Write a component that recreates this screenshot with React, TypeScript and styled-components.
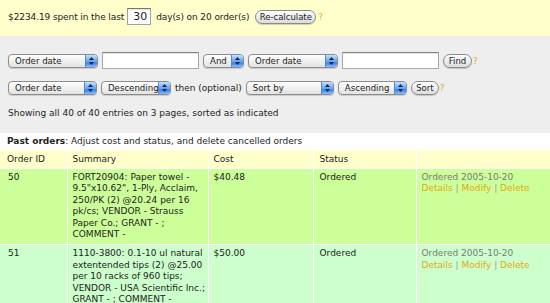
import React from "react";
import styled, { createGlobalStyle } from "styled-components";

const GlobalStyle = createGlobalStyle`
  body {
    margin: 0;
    background: #fff;
    font-family: "DejaVu Sans", "Liberation Sans", sans-serif;
    font-size: 9px;
    color: #222;
  }
`;

const SpendBar = styled.div`
  height: 36px;
  box-sizing: border-box;
  background: #ffffcc;
  display: flex;
  align-items: center;
  padding: 0 8px 3px;
  letter-spacing: -0.1px;
`;

const DaysInput = styled.div`
  width: 24px;
  height: 17px;
  box-sizing: border-box;
  margin: 0 5px 0 3px;
  border: 1px solid #a0a0a0;
  border-top-color: #777;
  background: #fff;
  font-size: 11px;
  line-height: 15px;
  padding-left: 5px;
  letter-spacing: 0;
  box-shadow: inset 0 1px 1px rgba(0, 0, 0, 0.12);
`;

const PillButton = styled.div<{ $w: number }>`
  width: ${(p) => p.$w}px;
  height: 14px;
  box-sizing: border-box;
  border: 1px solid #8a8a8a;
  border-radius: 7px;
  background: linear-gradient(#ffffff, #dcdcdc);
  box-shadow: 0 1px 1px rgba(0, 0, 0, 0.18);
  font-size: 8.5px;
  line-height: 12px;
  letter-spacing: 0;
  text-align: center;
  white-space: nowrap;
`;

const Help = styled.span`
  color: #e2ad22;
  margin-left: 2px;
`;

const FilterPanel = styled.div`
  height: 97px;
  box-sizing: border-box;
  background: #eeeeee;
  padding: 16px 8px 0;
`;

const FilterRow = styled.div<{ $h: number; $top?: number }>`
  display: flex;
  align-items: center;
  gap: 4px;
  height: ${(p) => p.$h}px;
  margin-top: ${(p) => p.$top ?? 0}px;
  white-space: nowrap;
`;

const TextBox = styled.div`
  width: 97px;
  height: 17px;
  box-sizing: border-box;
  border: 1px solid #a8a8a8;
  border-top-color: #808080;
  background: #fff;
  box-shadow: inset 0 1px 1px rgba(0, 0, 0, 0.1);
`;

const SelectBox = styled.div<{ $w: number }>`
  width: ${(p) => p.$w}px;
  height: 14px;
  box-sizing: border-box;
  display: flex;
  border: 1px solid #8c8c8c;
  border-radius: 4px;
  background: linear-gradient(#ffffff, #e2e2e2);
  box-shadow: 0 1px 1px rgba(0, 0, 0, 0.15);
  overflow: hidden;
`;

const SelectLabel = styled.span`
  flex: 1;
  padding-left: 6px;
  font-size: 8.6px;
  line-height: 12px;
  overflow: hidden;
`;

const SelectArrow = styled.span`
  width: 11px;
  display: flex;
  align-items: center;
  justify-content: center;
  border-left: 1px solid #5a86c4;
  background: linear-gradient(#c4e1ff, #5fa2f4 55%, #3a86ee 70%, #8cc0ff);
`;

const Showing = styled.div`
  margin-top: 13px;
  line-height: 11px;
`;

const SectionTitle = styled.div`
  height: 17px;
  line-height: 17px;
  padding-left: 7px;
  b {
    font-weight: bold;
  }
`;

const OrdersTable = styled.table`
  width: 550px;
  border-collapse: collapse;
  table-layout: fixed;
`;

const HeadCell = styled.th<{ $pad?: number }>`
  height: 18px;
  box-sizing: border-box;
  padding: 0 0 0 ${(p) => p.$pad ?? 5}px;
  background: #ffffcc;
  border-right: 1px solid #fff;
  font-weight: normal;
  text-align: left;
  &:last-child {
    border-right: none;
  }
`;

const Row = styled.tr<{ $bg: string }>`
  background: ${(p) => p.$bg};
`;

const Cell = styled.td<{ $pad?: number }>`
  vertical-align: top;
  padding: 3px 2px 3px ${(p) => p.$pad ?? 5}px;
  line-height: 11.6px;
  border-right: 1px solid #fff;
  border-top: 1px solid #fff;
  &:last-child {
    border-right: none;
  }
`;

const Stamp = styled.div`
  color: #7a7a7a;
`;

const Actions = styled.div`
  color: #9a9a9a;
  a {
    color: #e3a913;
    text-decoration: none;
  }
`;

const Arrows = () => (
  <svg width="5" height="8" viewBox="0 0 5 8">
    <polygon points="0,3 2.5,0 5,3" fill="#16264a" />
    <polygon points="0,5 2.5,8 5,5" fill="#16264a" />
  </svg>
);

const Select = ({ label, w }: { label: string; w: number }) => (
  <SelectBox $w={w}>
    <SelectLabel>{label}</SelectLabel>
    <SelectArrow>
      <Arrows />
    </SelectArrow>
  </SelectBox>
);

const orders = [
  {
    id: "50",
    bg: "#ccff99",
    summary:
      'FORT20904: Paper towel - 9.5"x10.62", 1-Ply, Acclaim, 250/PK (2) @20.24 per 16 pk/cs; VENDOR - Strauss Paper Co.; GRANT - ; COMMENT -',
    cost: "$40.48",
    status: "Ordered",
    date: "2005-10-20",
  },
  {
    id: "51",
    bg: "#ccffcc",
    summary:
      "1110-3800: 0.1-10 ul natural extentended tips (2) @25.00 per 10 racks of 960 tips; VENDOR - USA Scientific Inc.; GRANT - ; COMMENT -",
    cost: "$50.00",
    status: "Ordered",
    date: "2005-10-20",
  },
];

const App = () => (
  <>
    <GlobalStyle />
    <SpendBar>
      $2234.19 spent in the last
      <DaysInput>30</DaysInput>
      day(s) on 20 order(s)
      <PillButton $w={61} style={{ marginLeft: 6 }}>
        Re-calculate
      </PillButton>
      <Help>?</Help>
    </SpendBar>
    <FilterPanel>
      <FilterRow $h={17}>
        <Select label="Order date" w={90} />
        <TextBox />
        <Select label="And" w={41} />
        <Select label="Order date" w={90} />
        <TextBox />
        <PillButton $w={29}>Find</PillButton>
        <Help style={{ marginLeft: -3 }}>?</Help>
      </FilterRow>
      <FilterRow $h={14} $top={12}>
        <Select label="Order date" w={89} />
        <Select label="Descending" w={70} />
        <span>then (optional)</span>
        <Select label="Sort by" w={88} />
        <Select label="Ascending" w={69} />
        <PillButton $w={28}>Sort</PillButton>
        <Help style={{ marginLeft: -3 }}>?</Help>
      </FilterRow>
      <Showing>Showing all 40 of 40 entries on 3 pages, sorted as indicated</Showing>
    </FilterPanel>
    <SectionTitle>
      <b>Past orders</b>: Adjust cost and status, and delete cancelled orders
    </SectionTitle>
    <OrdersTable>
      <colgroup>
        <col style={{ width: 67 }} />
        <col style={{ width: 141 }} />
        <col style={{ width: 105 }} />
        <col style={{ width: 103 }} />
        <col style={{ width: 134 }} />
      </colgroup>
      <thead>
        <tr>
          <HeadCell $pad={7}>Order ID</HeadCell>
          <HeadCell>Summary</HeadCell>
          <HeadCell>Cost</HeadCell>
          <HeadCell $pad={6}>Status</HeadCell>
          <HeadCell />
        </tr>
      </thead>
      <tbody>
        {orders.map((o) => (
          <Row key={o.id} $bg={o.bg}>
            <Cell $pad={8}>{o.id}</Cell>
            <Cell>{o.summary}</Cell>
            <Cell>{o.cost}</Cell>
            <Cell $pad={6}>{o.status}</Cell>
            <Cell>
              <Stamp>Ordered {o.date}</Stamp>
              <Actions>
                <a href="#">Details</a> | <a href="#">Modify</a> |{" "}
                <a href="#">Delete</a>
              </Actions>
            </Cell>
          </Row>
        ))}
      </tbody>
    </OrdersTable>
  </>
);

export default App;
